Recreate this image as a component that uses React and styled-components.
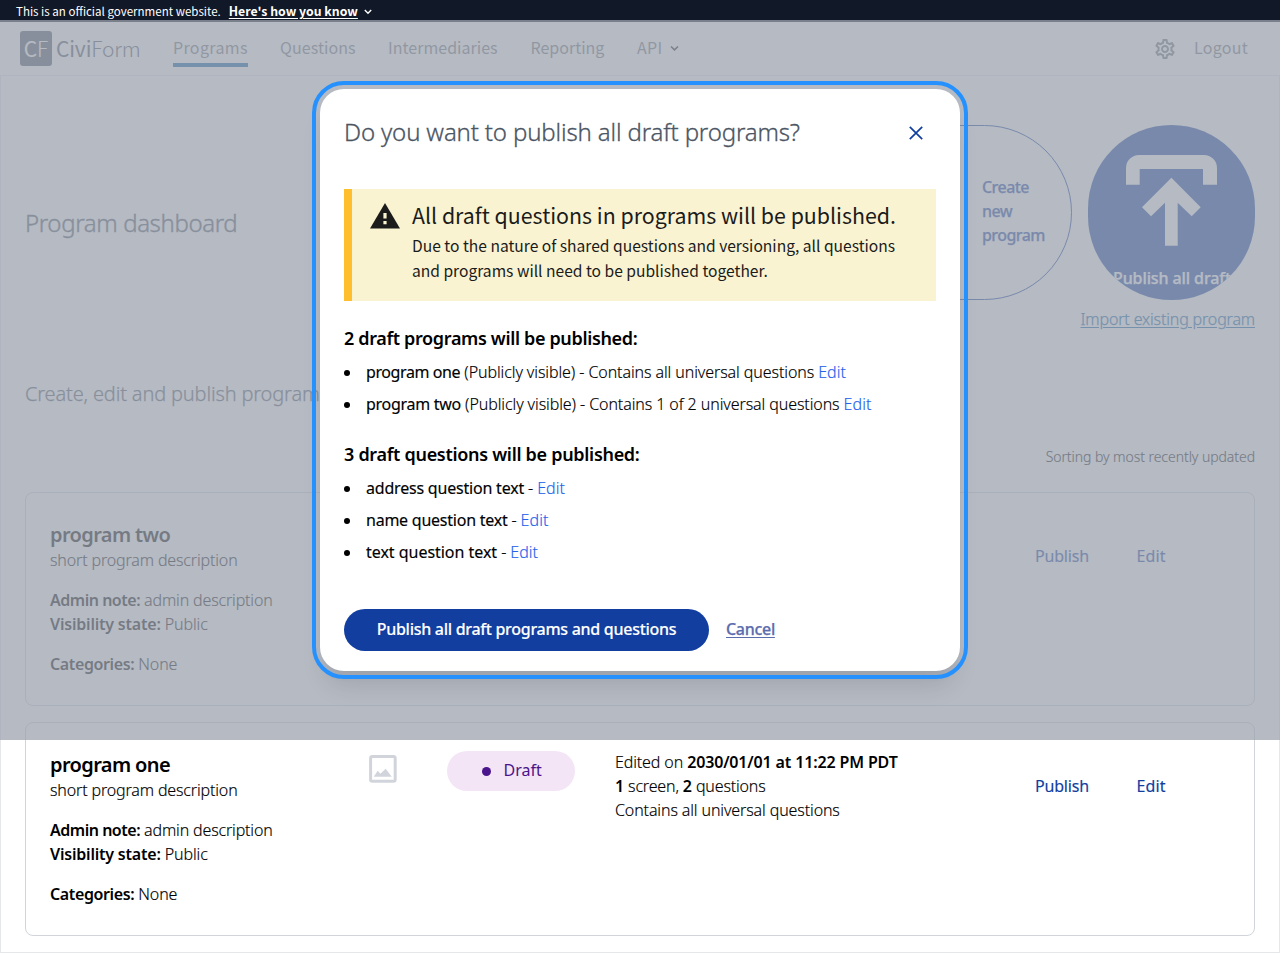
import React from 'react';
import styled, { createGlobalStyle, css } from 'styled-components';
import { MdOutlineSettings } from 'react-icons/md';

const blue = '#113e9f';
const gray600 = '#4b5563';
const sans = '"Noto Sans", "Open Sans", sans-serif';
const source = '"Noto Sans CJK SC", "Open Sans", sans-serif';

const GlobalStyle = createGlobalStyle`
  *, *::before, *::after { box-sizing: border-box; }
  html, body { margin: 0; background: #fff; }
  body { font: 350 16px/24px ${sans}; color: #000; height: 953px; overflow: hidden; }
  h1, h2, h3, p, ul { margin: 0; padding: 0; font-weight: inherit; }
  button { font: inherit; border: 0; background: none; padding: 0; cursor: pointer; }
`;

/* Tracking is set per run of text, in hundredths of a pixel. */
const tracked = css`letter-spacing: ${(p) => (p.$track ?? -12) / 100}px;`;

/* A hairline stroke thickens the light weight slightly. */
const sturdy = css`-webkit-text-stroke: 0.25px currentColor;`;

const Page = styled.div`
  position: relative;
  display: flex;
  flex-direction: column;
  width: 1280px;
  height: 953px;
  overflow: hidden;
`;

const Banner = styled.div`
  display: flex;
  align-items: flex-start;
  height: 22px;
  padding-left: 16px;
  background: #111827;
  color: #fff;
  font: 400 11.55px/22px ${source};
  white-space: nowrap;
`;

const BannerLink = styled.a`
  margin-left: 8px;
  font-size: 12.3px;
  font-weight: 700;
  text-decoration: underline;
  text-underline-offset: 2px;
`;

const BannerChevron = styled.svg`
  margin: 9px 0 0 6px;
`;

const Header = styled.header`
  display: flex;
  align-items: center;
  height: 53px;
  padding: 0 32px 0 20px;
  font: 400 16px/24px ${source};
  color: #71767a;
`;

const Logo = styled.div`
  display: flex;
  align-items: center;
  gap: 4px;
  width: 153px;
  color: ${gray600};
  font-size: 21px;
  font-weight: 300;
  letter-spacing: -0.15px;
  white-space: nowrap;
`;

const LogoMark = styled.span`
  display: flex;
  align-items: center;
  justify-content: center;
  width: 32px;
  height: 35px;
  padding-bottom: 1px;
  border-radius: 3px;
  background: ${gray600};
  color: #fff;
`;

const LogoName = styled.span`
  padding-bottom: 1px;
`;

const Medium = styled.span`
  font-weight: 400;
`;

const Nav = styled.nav`
  display: flex;
  align-items: flex-start;
  height: 37px;
  gap: 32px;
  flex: 1;
`;

const NavItem = styled.a`
  display: flex;
  align-items: center;
  width: ${(p) => p.$width}px;
  height: 37px;
  padding-top: 1px;
  white-space: nowrap;
  border-bottom: 4px solid ${(p) => (p.$active ? '#005ea2' : 'transparent')};
  ${tracked}
`;

const NavChevron = styled.svg`
  margin: 3px 0 0 8px;
`;

const Tools = styled.div`
  display: flex;
  align-items: center;
  gap: 17px;
  height: 53px;
  svg { display: block; }
`;

const Logout = styled.a`
  width: 54px;
  padding-bottom: 3px;
  letter-spacing: 0.3px;
`;

const Main = styled.main`
  display: flex;
  flex-direction: column;
  flex: 1;
  border: 1px solid #e5e7eb;
  padding: 0 24px 16px;
`;

const Hero = styled.section`
  display: flex;
  align-items: center;
  justify-content: space-between;
  height: 206px;
  margin-top: 49px;
`;

const PageTitle = styled.h1`
  padding-bottom: 11px;
  color: ${gray600};
  font-size: 24px;
  line-height: 32px;
  letter-spacing: -0.38px;
  -webkit-text-stroke: 0.4px currentColor;
`;

const Actions = styled.div`
  display: flex;
  flex-direction: column;
  align-items: flex-end;
  gap: 7px;
`;

const ActionButtons = styled.div`
  display: flex;
  gap: 16px;
  height: 175px;
`;

const CreateButton = styled.button`
  display: flex;
  align-items: center;
  justify-content: flex-end;
  width: 220px;
  padding: 0 25px 0 0;
  border: 1px solid ${blue};
  border-radius: 88px;
  color: ${blue};
  font-weight: 500;
  text-align: left;
  letter-spacing: -0.55px;
  ${sturdy}
`;

const CreateLabel = styled.span`
  width: 64px;
  padding-bottom: 4px;
`;

const PublishButton = styled.button`
  display: flex;
  flex-direction: column;
  align-items: flex-start;
  width: 167px;
  padding: 30px 25px 0;
  border-radius: 84px;
  overflow: hidden;
  background: ${blue};
  color: #fff;
  font-weight: 500;
  letter-spacing: -0.1px;
  white-space: nowrap;
  ${sturdy}
  svg { align-self: center; flex: none; margin-bottom: 20px; }
`;

const ImportLink = styled.a`
  color: #005ea2;
  text-decoration: underline;
  text-underline-offset: 2px;
  ${tracked}
  ${sturdy}
`;

const Subtitle = styled.h2`
  margin-top: 49px;
  color: ${gray600};
  font-size: 20px;
  line-height: 28px;
  letter-spacing: -0.16px;
  ${sturdy}
`;

const SortNote = styled.p`
  margin-top: 39px;
  font-size: 14px;
  line-height: 20px;
  text-align: right;
  letter-spacing: -0.06px;
  -webkit-text-stroke: 0.15px currentColor;
`;

const Cards = styled.div`
  display: flex;
  flex-direction: column;
  gap: 16px;
  margin-top: 25px;
`;

const Card = styled.article`
  display: flex;
  height: 214px;
  padding: 27px 24px;
  border: 1px solid #d1d5db;
  border-radius: 8px;
`;

const Summary = styled.div`
  display: flex;
  flex-direction: column;
  gap: 16px;
  width: 319px;
`;

const CardTitle = styled.h3`
  padding-top: 1px;
  font-size: 20px;
  font-weight: 600;
  line-height: 27px;
  letter-spacing: -0.62px;
`;

const Text = styled.p`
  white-space: nowrap;
  -webkit-text-stroke: 0.15px currentColor;
  ${tracked}
`;

const Strong = styled.span`
  font-weight: 600;
  -webkit-text-stroke: 0;
  ${tracked}
`;

const Status = styled.div`
  display: flex;
  align-items: flex-start;
  width: 666px;
`;

const ImageIcon = styled.svg`
  margin-top: 5px;
`;

const Badge = styled.div`
  display: flex;
  align-items: center;
  width: 128px;
  height: 40px;
  margin: 1px 40px 0 50px;
  padding: 0 0 2px 34.5px;
  gap: 13px;
  border-radius: 20px;
  background: #f3e5f5;
  color: #4a148c;
  font-weight: 400;
`;

const Dot = styled.span`
  width: 9px;
  height: 9px;
  margin-top: 2px;
  border-radius: 50%;
  background: currentColor;
`;

const CardActions = styled.div`
  display: flex;
  padding-top: 24px;
  color: ${blue};
  font-weight: 400;
`;

const CardLink = styled.a`
  width: ${(p) => p.$width}px;
  -webkit-text-stroke: 0.15px currentColor;
  ${tracked}
`;

const Overlay = styled.div`
  position: absolute;
  inset: 20px 0 auto;
  display: flex;
  align-items: flex-start;
  justify-content: center;
  height: 720px;
  padding-top: 69px;
  background: rgba(156, 163, 175, 0.75);
`;

const Modal = styled.div`
  display: flex;
  flex-direction: column;
  width: 640px;
  height: 582px;
  padding: 24px 24px 20px;
  border-radius: 24px;
  background: #fff;
  outline: 4px solid #2491ff;
  outline-offset: 4px;
  box-shadow: 0 20px 25px -5px rgba(0, 0, 0, 0.1), 0 10px 10px -5px rgba(0, 0, 0, 0.04);
`;

const ModalHead = styled.div`
  display: flex;
  align-items: center;
  justify-content: space-between;
  height: 40px;
  padding: 0 13px 2px 0;
  color: ${gray600};
  font-size: 24px;
  line-height: 32px;
  letter-spacing: -0.15px;
  -webkit-text-stroke: 0.3px currentColor;
`;

const Alert = styled.div`
  display: flex;
  flex: none;
  height: 112px;
  margin-top: 36px;
  padding: 12px 0 0 18px;
  border-left: 8px solid #ffbe2e;
  background: #faf3d1;
  color: #1b1b1b;
  font: 400 15.6px/25px ${source};
  white-space: nowrap;
`;

const AlertIcon = styled.svg`
  flex: none;
  margin: 2px 12px 0 0;
`;

const AlertTitle = styled.h3`
  margin-bottom: 4px;
  font-size: 21.35px;
  line-height: 28px;
`;

const ListTitle = styled.h3`
  margin-top: ${(p) => p.$gap}px;
  font-size: 18px;
  font-weight: 600;
  line-height: 28px;
  ${tracked}
`;

const List = styled.ul`
  display: flex;
  flex-direction: column;
  gap: 8px;
  margin-top: 8px;
  list-style: none;
`;

const Item = styled.li`
  display: flex;
  align-items: center;
  height: 24px;
  white-space: pre;
  -webkit-text-stroke: 0.15px currentColor;
  ${tracked}
  &::before {
    content: '';
    width: 6px;
    height: 6px;
    margin: 1px 16px 0 0;
    border-radius: 50%;
    background: #000;
  }
`;

const ItemName = styled.span`
  font-weight: 400;
  ${tracked}
`;

const EditLink = styled.a`
  color: #2563eb;
  letter-spacing: 0.05px;
`;

const ModalFoot = styled.div`
  display: flex;
  align-items: center;
  gap: 17px;
  height: 42px;
  margin-top: 45px;
`;

const ConfirmButton = styled.button`
  width: 365px;
  height: 42px;
  padding-bottom: 2px;
  border-radius: 21px;
  background: ${blue};
  color: #fff;
  font-weight: 500;
  letter-spacing: -0.28px;
  -webkit-text-stroke: 0.15px currentColor;
`;

const CancelButton = styled.button`
  padding-bottom: 2px;
  color: #5b6cae;
  font-weight: 500;
  text-decoration: underline;
  text-underline-offset: 2px;
  letter-spacing: -0.3px;
  ${sturdy}
`;

function ProgramStatus() {
  return (
    <>
      <ImageIcon width="28" height="28" viewBox="0 0 28 28">
        <rect x="1.6" y="1.6" width="24.6" height="24.6" rx="1.8" fill="none" stroke="#d1d5db" strokeWidth="3" />
        <path d="M4.7 21.7l4-6 2.7 3.1 5.3-5.1 6 8z" fill="#d1d5db" />
      </ImageIcon>
      <Badge><Dot />Draft</Badge>
      <div>
        <Text>Edited on <Strong $track={-15}>2030/01/01 at 11:22 PM PDT</Strong></Text>
        <Text $track={-16}><Strong>1</Strong> screen, <Strong>2</Strong> questions</Text>
        <Text>Contains all universal questions</Text>
      </div>
    </>
  );
}

function ProgramCard({ name, children }) {
  return (
    <Card>
      <Summary>
        <div>
          <CardTitle>{name}</CardTitle>
          <Text $track={-15}>short program description</Text>
        </div>
        <div>
          <Text $track={-16}><Strong $track={-48}>Admin note:</Strong> admin description</Text>
          <Text $track={-12}><Strong $track={-20}>Visibility state:</Strong> Public</Text>
        </div>
        <Text $track={-12}><Strong $track={-38}>Categories:</Strong> None</Text>
      </Summary>
      <Status>{children}</Status>
      <CardActions>
        <CardLink $width={101.5} $track={-20}>Publish</CardLink>
        <CardLink $width={40} $track={10}>Edit</CardLink>
      </CardActions>
    </Card>
  );
}

export default function App() {
  return (
    <>
      <GlobalStyle />
      <Page>
        <Banner>
          This is an official government website.
          <BannerLink>Here's how you know</BannerLink>
          <BannerChevron width="8" height="6" viewBox="0 0 8 6">
            <path d="M0.8 1l3.2 3.2L7.2 1" fill="none" stroke="#fff" strokeWidth="1.4" />
          </BannerChevron>
        </Banner>
        <Header>
          <Logo>
            <LogoMark><Medium>C</Medium>F</LogoMark>
            <LogoName><Medium>Civi</Medium>Form</LogoName>
          </Logo>
          <Nav>
            <NavItem $active $width={75} $track={35}>Programs</NavItem>
            <NavItem $width={76} $track={8}>Questions</NavItem>
            <NavItem $width={110.5} $track={2}>Intermediaries</NavItem>
            <NavItem $width={74.5} $track={0}>Reporting</NavItem>
            <NavItem $width={60} $track={30}>
              API
              <NavChevron width="9" height="7" viewBox="0 0 9 7">
                <path d="M1 1.5l3.5 3.4L8 1.5" fill="none" stroke="#1b1b1b" strokeWidth="1.6" />
              </NavChevron>
            </NavItem>
          </Nav>
          <Tools>
            <MdOutlineSettings size={24} color="#71767a" />
            <Logout>Logout</Logout>
          </Tools>
        </Header>
        <Main>
          <Hero>
            <PageTitle>Program dashboard</PageTitle>
            <Actions>
              <ActionButtons>
                <CreateButton><CreateLabel>Create new program</CreateLabel></CreateButton>
                <PublishButton>
                  <svg width="91" height="91" viewBox="0 0 91 91" fill="#fff">
                    <path d="M0 29.7V13A13 13 0 0 1 13 0h65a13 13 0 0 1 13 13v16.7H77V14H13.7v15.7z" />
                    <path d="M45.4 22.7L74.7 52.3l-9 9L51.7 47.7v43H39v-43L25 61.3l-9-9z" />
                  </svg>
                  Publish all drafts
                </PublishButton>
              </ActionButtons>
              <ImportLink $track={-15}>Import existing program</ImportLink>
            </Actions>
          </Hero>
          <Subtitle>Create, edit and publish programs</Subtitle>
          <SortNote>Sorting by most recently updated</SortNote>
          <Cards>
            <ProgramCard name="program two" />
            <ProgramCard name="program one"><ProgramStatus /></ProgramCard>
          </Cards>
        </Main>
        <Overlay>
          <Modal>
            <ModalHead>
              Do you want to publish all draft programs?
              <svg width="14" height="16" viewBox="0 -2 14 16">
                <path d="M0.8 0.8l12.4 12.4M13.2 0.8L0.8 13.2" stroke={blue} strokeWidth="1.7" />
              </svg>
            </ModalHead>
            <Alert>
              <AlertIcon width="30" height="26" viewBox="0 0 30 26">
                <path d="M15 0l15 25.4H0z" fill="#1b1b1b" />
                <path d="M13.4 10h3.2v5.6h-3.2zM13.4 18h3.2v3.2h-3.2z" fill="#faf3d1" />
              </AlertIcon>
              <div>
                <AlertTitle>All draft questions in programs will be published.</AlertTitle>
                <p>Due to the nature of shared questions and versioning, all questions<br />and programs will need to be published together.</p>
              </div>
            </Alert>
            <ListTitle $gap={23} $track={-35}>2 draft programs will be published:</ListTitle>
            <List>
              <Item $track={-9}><ItemName $track={-40}>program one</ItemName> (Publicly visible) - Contains all universal questions <EditLink>Edit</EditLink></Item>
              <Item $track={-9}><ItemName $track={-28}>program two</ItemName> (Publicly visible) - Contains 1 of 2 universal questions <EditLink>Edit</EditLink></Item>
            </List>
            <ListTitle $gap={24} $track={-30}>3 draft questions will be published:</ListTitle>
            <List>
              <Item><ItemName $track={-20}>address question text</ItemName> - <EditLink>Edit</EditLink></Item>
              <Item><ItemName $track={-24}>name question text</ItemName> - <EditLink>Edit</EditLink></Item>
              <Item><ItemName $track={-3}>text question text</ItemName> - <EditLink>Edit</EditLink></Item>
            </List>
            <ModalFoot>
              <ConfirmButton>Publish all draft programs and questions</ConfirmButton>
              <CancelButton>Cancel</CancelButton>
            </ModalFoot>
          </Modal>
        </Overlay>
      </Page>
    </>
  );
}
